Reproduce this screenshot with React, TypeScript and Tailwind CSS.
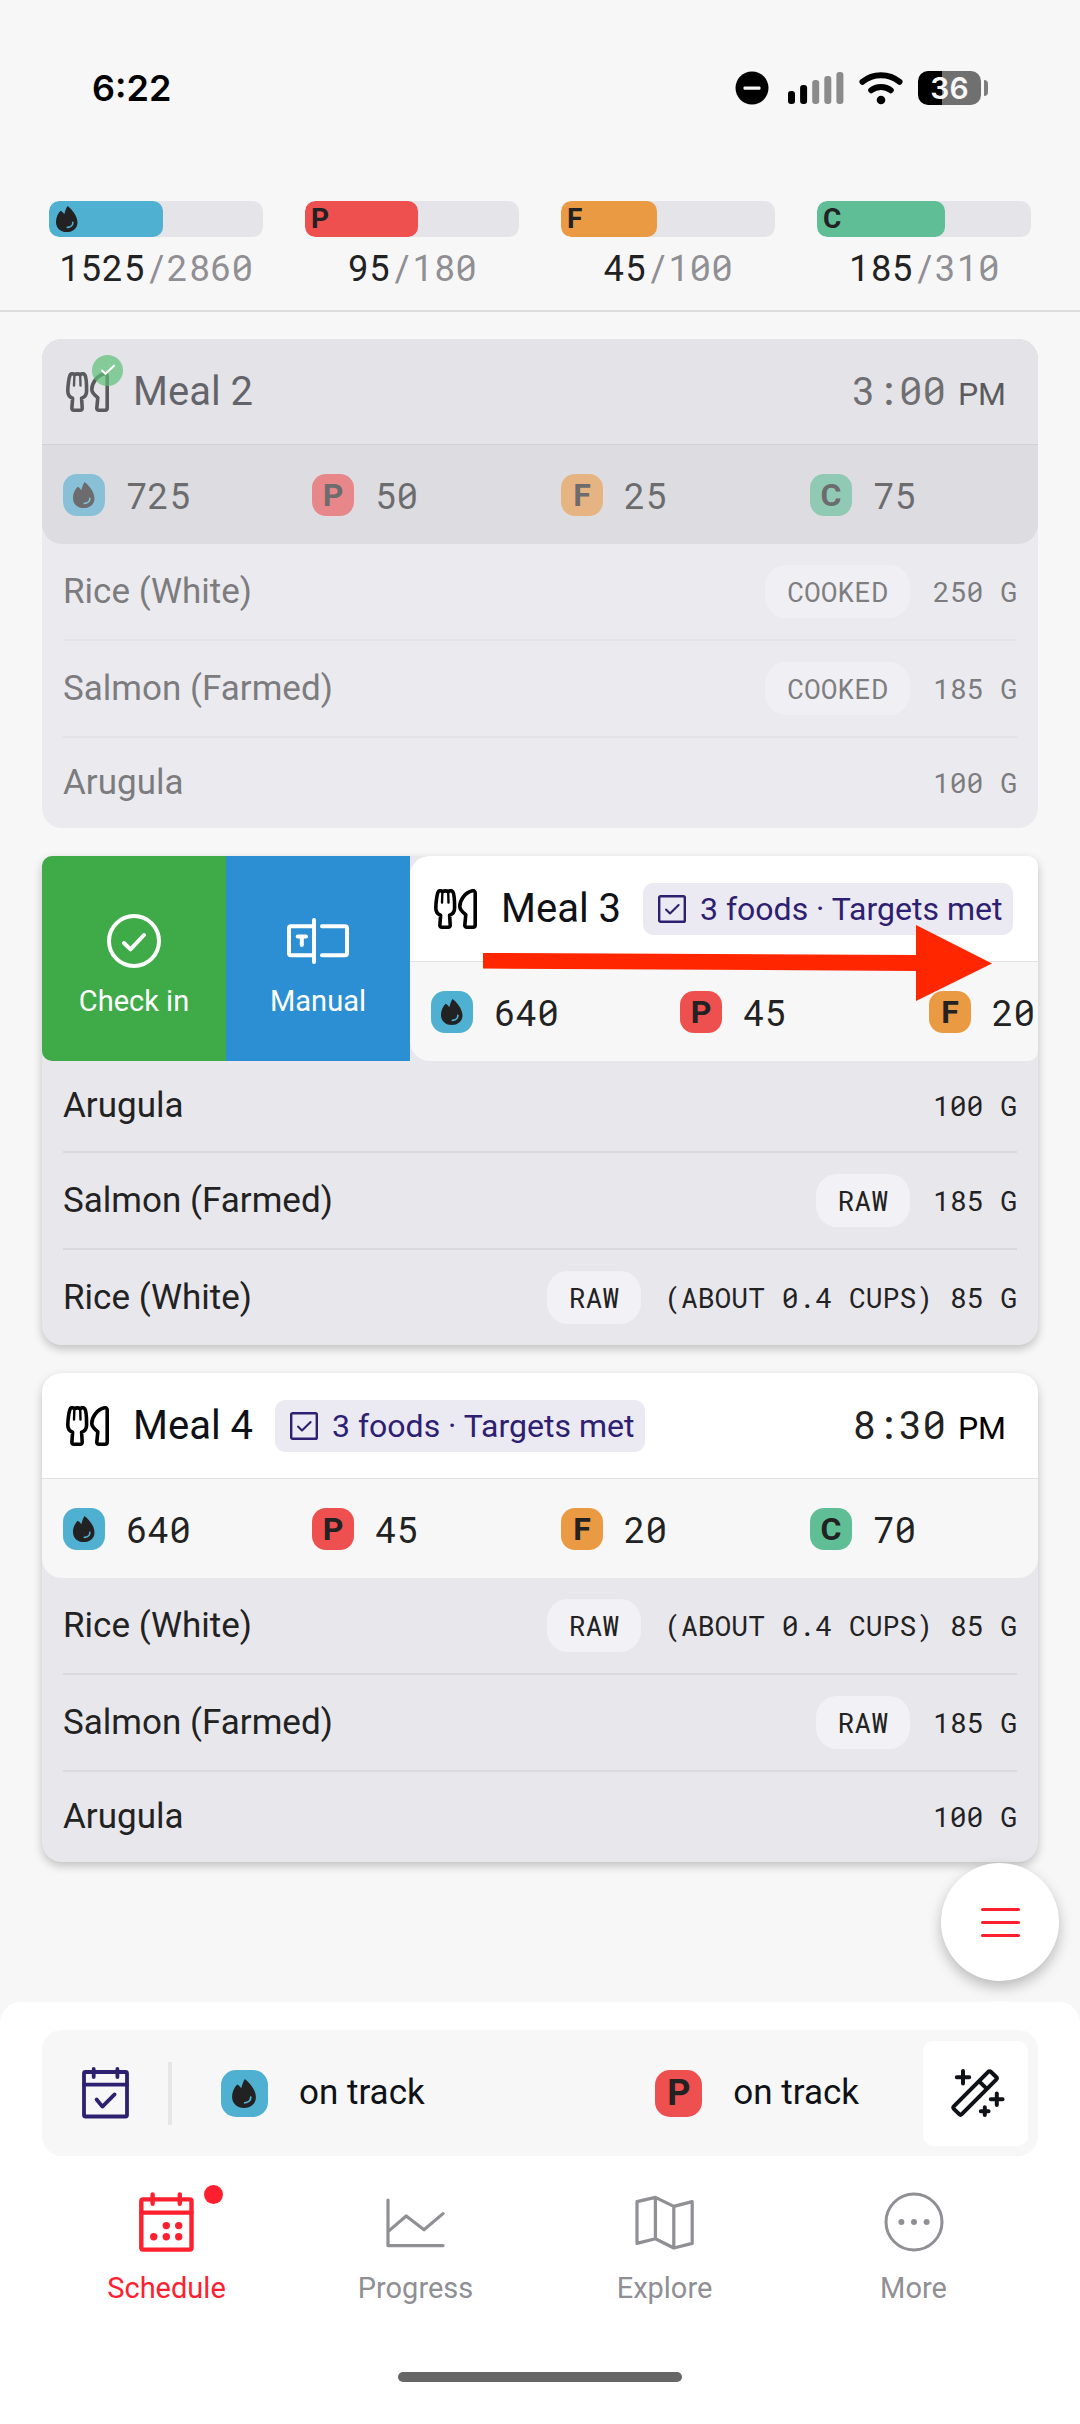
import React from 'react';
import clsx from 'clsx';

type MacroKey = 'kcal' | 'P' | 'F' | 'C';

interface Food {
  name: string;
  prep?: string;
  amount: string;
}

interface Meal {
  title: string;
  time?: string;
  targets?: string;
  macros: number[];
  foods: Food[];
}

const MACROS: MacroKey[] = ['kcal', 'P', 'F', 'C'];

const MACRO_BG: Record<MacroKey, string> = {
  kcal: 'bg-[#50b0d1]',
  P: 'bg-[#ee4f4f]',
  F: 'bg-[#eb9a44]',
  C: 'bg-[#60be96]',
};

const TOTALS = [
  { key: 'kcal' as MacroKey, eaten: 1525, goal: 2860 },
  { key: 'P' as MacroKey, eaten: 95, goal: 180 },
  { key: 'F' as MacroKey, eaten: 45, goal: 100 },
  { key: 'C' as MacroKey, eaten: 185, goal: 310 },
];

const MEAL_2: Meal = {
  title: 'Meal 2',
  time: '3:00',
  macros: [725, 50, 25, 75],
  foods: [
    { name: 'Rice (White)', prep: 'COOKED', amount: '250 G' },
    { name: 'Salmon (Farmed)', prep: 'COOKED', amount: '185 G' },
    { name: 'Arugula', amount: '100 G' },
  ],
};

const MEAL_3: Meal = {
  title: 'Meal 3',
  targets: '3 foods · Targets met',
  macros: [640, 45, 20],
  foods: [
    { name: 'Arugula', amount: '100 G' },
    { name: 'Salmon (Farmed)', prep: 'RAW', amount: '185 G' },
    { name: 'Rice (White)', prep: 'RAW', amount: '(ABOUT 0.4 CUPS) 85 G' },
  ],
};

const MEAL_4: Meal = {
  title: 'Meal 4',
  time: '8:30',
  targets: '3 foods · Targets met',
  macros: [640, 45, 20, 70],
  foods: [
    { name: 'Rice (White)', prep: 'RAW', amount: '(ABOUT 0.4 CUPS) 85 G' },
    { name: 'Salmon (Farmed)', prep: 'RAW', amount: '185 G' },
    { name: 'Arugula', amount: '100 G' },
  ],
};

const MONO = "font-['Roboto_Mono','DejaVu_Sans_Mono',monospace]";

/* ---------- icons ---------- */

function FlameIcon({ className }: { className?: string }) {
  return (
    <svg viewBox="9 6 25 29" className={className} aria-hidden="true">
      <path
        fill="#222"
        d="M22 7C26 10 32.3 17 32.3 24C32.3 30 27.5 34 21.2 34C15 34 10 30 10 23.5C10 19 12 15 14.8 12C16 12.5 17.5 14 18.6 15.5C19.5 12.5 20.5 9 22 7Z"
      />
      <path d="M27.5 24C27.6 27 25 29 21.8 29.2" fill="none" stroke="#50b0d1" strokeWidth="1.7" strokeLinecap="round" />
    </svg>
  );
}

function UtensilsIcon() {
  return (
    <svg
      viewBox="0 0 43 40"
      className="h-10 w-[43px]"
      fill="none"
      stroke="#000"
      strokeWidth="3.6"
      strokeLinejoin="round"
      strokeLinecap="round"
      aria-hidden="true"
    >
      <path d="M4.6 2.2C3 4 1.8 14 1.8 19C1.8 23 4 25.2 6.6 26.2L5.9 36C5.8 37.6 6.5 38.2 8 38.2H14C15.6 38.2 16.3 37.6 16.2 36L15.6 26.2C19 25 20.6 22.5 20.6 19C20.6 14 20 4.5 18.8 2.8C17.8 1.6 15.6 1.8 14.2 2.6C12.8 1.8 10 1.8 8.4 2.6C7.2 1.8 5.6 1.6 4.6 2.2Z" />
      <path d="M8.4 3L8 13.6M14.2 3L14.5 13.6" strokeWidth="2.4" />
      <path d="M38.4 1.8C31 3.5 25.8 11 25.8 17.5C25.8 21 29 23.4 31.8 25.8L30.8 36C30.7 37.6 31.5 38.2 33 38.2H39C40.7 38.2 41.2 37.6 41.2 36V4C41.2 2.2 40 1.5 38.4 1.8Z" />
    </svg>
  );
}

function CheckboxIcon() {
  return (
    <svg viewBox="0 0 28 28" className="size-7" fill="none" stroke="#2e2070" strokeWidth="2.4" aria-hidden="true">
      <rect x="1.2" y="1.2" width="25.6" height="25.6" rx="1.4" />
      <path d="M8 14.6L12 18.4L20.6 10" strokeWidth="2.1" strokeLinecap="round" strokeLinejoin="round" />
    </svg>
  );
}

function CheckCircleIcon() {
  return (
    <svg viewBox="0 0 54 54" className="size-[54px]" fill="none" stroke="#fff" strokeWidth="4" aria-hidden="true">
      <circle cx="27" cy="27" r="25" />
      <path d="M17 29L23.5 35.4L37 21" strokeLinecap="round" strokeLinejoin="round" />
    </svg>
  );
}

function ManualIcon() {
  return (
    <svg
      viewBox="0 0 62 54"
      className="h-[54px] w-[62px]"
      fill="none"
      stroke="#fff"
      strokeWidth="4"
      strokeLinecap="round"
      strokeLinejoin="round"
      aria-hidden="true"
    >
      <path d="M27 12.3H4C2.8 12.3 2 13.1 2 14.3V39.3C2 40.5 2.8 41.3 4 41.3H27M27 6V48M35 12.3H58C59.2 12.3 60 13.1 60 14.3V39.3C60 40.5 59.2 41.3 58 41.3H35" />
      <path d="M10.7 22.6H19M14.8 22.6V31" />
    </svg>
  );
}

function CalendarCheckIcon() {
  return (
    <svg
      viewBox="0 0 47 52"
      className="h-[52px] w-[47px]"
      fill="none"
      stroke="#2e2070"
      strokeWidth="3.8"
      strokeLinecap="round"
      strokeLinejoin="round"
      aria-hidden="true"
    >
      <rect x="2" y="5" width="43" height="44.5" rx="1.5" />
      <path d="M2 17.6H45M11.7 2V10M35.4 2V10M14.6 32.5L20.4 39.6L32.6 27.4" />
    </svg>
  );
}

function WandIcon() {
  return (
    <svg
      viewBox="0 0 54 48"
      className="h-12 w-[54px]"
      fill="none"
      stroke="#0e1116"
      strokeWidth="4"
      strokeLinecap="round"
      strokeLinejoin="round"
      aria-hidden="true"
    >
      <path d="M37.2 2.8L2.8 37.4C2 38.2 2 39 2.8 39.8L8.2 45.2C9 46 10 46 10.8 45.2L45.2 10.6C46 9.8 46 8.8 45.2 8L39.8 2.8C39 2 38 2 37.2 2.8Z" />
      <path d="M28.4 12.6L35.4 19.4" />
      <path d="M12 2V14.5M5.8 8.2H18.2M45.8 24.5V36M39.8 30.2H51.6M33.8 38.2V46M29.8 42.2H37.6" />
    </svg>
  );
}

function ScheduleIcon() {
  return (
    <svg viewBox="0 0 55 60" className="h-[60px] w-[55px]" fill="none" stroke="currentColor" strokeWidth="4.4" strokeLinecap="round" aria-hidden="true">
      <rect x="2.3" y="7.4" width="50.2" height="50.2" rx="1.8" strokeLinejoin="round" />
      <path d="M2.3 20.6H52.5M13.6 2.4V11.8M40.8 2.4V11.8" />
      <g fill="currentColor" stroke="none">
        <circle cx="27.3" cy="33.6" r="3.7" />
        <circle cx="39.7" cy="33.6" r="3.7" />
        <circle cx="14.7" cy="44.8" r="3.7" />
        <circle cx="27.3" cy="44.8" r="3.7" />
        <circle cx="39.7" cy="44.8" r="3.7" />
      </g>
    </svg>
  );
}

function ProgressIcon() {
  return (
    <svg
      viewBox="0 0 59 60"
      className="h-[60px] w-[59px]"
      fill="none"
      stroke="currentColor"
      strokeWidth="3.2"
      strokeLinecap="round"
      strokeLinejoin="round"
      aria-hidden="true"
    >
      <path d="M2 8V53.6H57M2 39.6L20.2 24L38 37.8L57 21.6" />
    </svg>
  );
}

function ExploreIcon() {
  return (
    <svg
      viewBox="0 0 59 60"
      className="h-[60px] w-[59px]"
      fill="none"
      stroke="currentColor"
      strokeWidth="3.2"
      strokeLinejoin="round"
      aria-hidden="true"
    >
      <path d="M2 9.6L20.4 5.4L38.8 14.4L57.2 9.6V51.4L38.8 56L20.4 46.8L2 51.4ZM20.4 5.4V46.8M38.8 14.4V56" />
    </svg>
  );
}

function MoreIcon() {
  return (
    <svg viewBox="0 0 60 60" className="size-[60px]" fill="none" stroke="currentColor" strokeWidth="3" aria-hidden="true">
      <circle cx="30" cy="30" r="28" />
      <g fill="currentColor" stroke="none">
        <circle cx="17.4" cy="30" r="3" />
        <circle cx="30" cy="30" r="3" />
        <circle cx="42.6" cy="30" r="3" />
      </g>
    </svg>
  );
}

/* ---------- status bar ---------- */

function StatusBar() {
  return (
    <div className="flex h-16 items-center justify-between px-[92px]">
      <span className="font-['Inter',sans-serif] text-[36px] leading-10 font-semibold text-black">6:22</span>
      <div className="flex items-center">
        <svg viewBox="0 0 34 34" className="mr-[19px] size-[34px]" aria-hidden="true">
          <circle cx="17" cy="17" r="16.5" />
          <rect x="8.5" y="15.5" width="17" height="3.2" rx="1" fill="#f7f7f7" />
        </svg>
        <svg viewBox="0 0 56 34" className="mr-[15px] h-[34px] w-14" aria-hidden="true">
          <rect x="0" y="20" width="7" height="13" rx="3" />
          <rect x="12.1" y="14" width="7" height="19" rx="3" />
          <g fill="#8b8b8b">
            <rect x="24.2" y="9" width="7" height="24" rx="3" />
            <rect x="36.3" y="5" width="7" height="28" rx="3" />
            <rect x="48.4" y="1" width="7" height="32" rx="3" />
          </g>
        </svg>
        <svg
          viewBox="0 0 44 34"
          className="mr-[15px] h-[34px] w-11"
          fill="none"
          stroke="#000"
          strokeWidth="6"
          strokeLinecap="round"
          aria-hidden="true"
        >
          <path d="M3.5 10.8C14 1.9 30 1.9 40.5 10.8" />
          <path d="M12.2 19.2C17.5 14.8 26.5 14.8 31.8 19.2" />
          <circle cx="22" cy="29" r="4.3" fill="#000" stroke="none" />
        </svg>
        <div className="flex h-[34px] w-[63px] items-center justify-center rounded-[10px] bg-[linear-gradient(to_right,#000_38%,#707070_38%)] font-['Inter',sans-serif] text-[30px] font-semibold text-[#f7f7f7]">
          36
        </div>
        <span className="ml-[3px] h-4 w-1 rounded-r-full bg-[#7d7d7d]" />
      </div>
    </div>
  );
}

/* ---------- macro pieces ---------- */

function MacroBadge({ macro, large }: { macro: MacroKey; large?: boolean }) {
  return (
    <span
      className={clsx(
        'flex shrink-0 items-center justify-center font-bold text-[#222]',
        large ? 'size-[47px] rounded-[15px] text-[36px]' : 'size-[42px] rounded-[14px] text-[32px]',
        MACRO_BG[macro],
      )}
    >
      {macro === 'kcal' ? <FlameIcon className={large ? 'h-[31px]' : 'h-7'} /> : macro}
    </span>
  );
}

function TotalBar({ macro, eaten, goal }: { macro: MacroKey; eaten: number; goal: number }) {
  return (
    <div className="flex flex-col items-center gap-[10px]">
      <div className="h-9 w-full overflow-hidden rounded-[10px] bg-[#e5e4e9]">
        <div
          className={clsx('flex h-full items-center rounded-[10px] pl-[6px] text-[28px] leading-9 font-bold text-[#222]', MACRO_BG[macro])}
          style={{ width: `${(eaten / goal) * 100}%` }}
        >
          {macro === 'kcal' ? <FlameIcon className="h-7" /> : macro}
        </div>
      </div>
      <div className={clsx('text-[36px] leading-10 text-[#222]', MONO)}>
        {eaten}
        <span className="text-[#8f8f94]">/{goal}</span>
      </div>
    </div>
  );
}

/* ---------- meal card ---------- */

function MealHead({ meal, done }: { meal: Meal; done?: boolean }) {
  return (
    <div className={clsx('overflow-hidden rounded-[20px]', done ? 'bg-[#dddde1]' : 'bg-[#f7f7f7]')}>
      <div
        className={clsx(
          'flex h-[106px] items-center border-b pr-8 pl-6',
          done ? 'border-[#d2d2d6] bg-[#e4e3e8]' : 'border-[#e1e1e3] bg-white',
        )}
      >
        <div className="relative">
          <div className={clsx(done && 'opacity-60')}>
            <UtensilsIcon />
          </div>
          {done && (
            <span className="absolute -top-[17px] left-[26px] flex size-[31px] items-center justify-center rounded-full bg-[#5dbf78]/70">
              <svg viewBox="0 0 16 12" className="h-3 w-4" fill="none" stroke="#fff" strokeWidth="2" strokeLinecap="round" aria-hidden="true">
                <path d="M2 6.5L5.5 9.8L14 1.8" />
              </svg>
            </span>
          )}
        </div>
        <h2 className={clsx('ml-6 shrink-0 text-[40px] leading-[48px] text-[#0e1116]', done && 'opacity-60')}>{meal.title}</h2>
        {meal.targets && (
          <span className="ml-[22px] flex h-[52px] shrink-0 items-center gap-[14px] rounded-[10px] bg-[#ebe9f2] pr-[11px] pl-[15px] text-[32px] whitespace-nowrap text-[#2e2070]">
            <CheckboxIcon />
            {meal.targets}
          </span>
        )}
        {meal.time && (
          <div className={clsx('ml-auto flex items-baseline gap-3', done && 'opacity-60')}>
            <span className={clsx('text-[39px] leading-[48px] text-[#222]', MONO)}>{meal.time}</span>
            <span className="text-[32px] leading-[48px] text-black">PM</span>
          </div>
        )}
      </div>
      <ul className={clsx('grid h-[99px] grid-cols-4', done && 'opacity-60')}>
        {meal.macros.map((grams, i) => (
          <li key={MACROS[i]} className="flex items-center gap-[21px] pl-[21px]">
            <MacroBadge macro={MACROS[i]} />
            <span className={clsx('text-[36px] leading-10 text-[#222]', MONO)}>{grams}</span>
          </li>
        ))}
      </ul>
    </div>
  );
}

function FoodList({ foods, done }: { foods: Food[]; done?: boolean }) {
  return (
    <ul className={clsx('divide-y-2 px-[21px]', done ? 'divide-[#e3e2e7]' : 'divide-[#dad9df]')}>
      {foods.map((food) => (
        <li key={food.name} className="flex items-center py-[21px] text-[#222]">
          <span className={clsx('text-[35px] leading-[48px]', done && 'opacity-55')}>{food.name}</span>
          <span className={clsx('ml-auto flex items-center gap-[23px] text-[28px]', MONO)}>
            {food.prep && (
              <span className={clsx('flex h-[53px] items-center rounded-[21px] px-[22px]', done ? 'bg-[#f0eff4]' : 'bg-[#f2f1f6]')}>
                <span className={clsx(done && 'opacity-55')}>{food.prep}</span>
              </span>
            )}
            <span className={clsx(done && 'opacity-55')}>{food.amount}</span>
          </span>
        </li>
      ))}
    </ul>
  );
}

function SwipedMealCard({ meal }: { meal: Meal }) {
  return (
    <article className="relative rounded-[20px] rounded-t-[10px] bg-[#e8e7ec] shadow-[0_4px_10px_rgba(0,0,0,0.22)]">
      <div className="flex overflow-hidden rounded-[10px]">
        <button type="button" className="flex w-[184px] shrink-0 flex-col items-center justify-center gap-[15px] bg-[#3eaa48] pt-4 text-white">
          <CheckCircleIcon />
          <span className="text-[29px] leading-9">Check in</span>
        </button>
        <button type="button" className="flex w-[184px] shrink-0 flex-col items-center justify-center gap-[15px] bg-[#2d8fd3] pt-4 text-white">
          <ManualIcon />
          <span className="text-[29px] leading-9">Manual</span>
        </button>
        {/* keeps its full width and runs off the right edge while swiped */}
        <div className="w-full shrink-0">
          <MealHead meal={meal} />
        </div>
      </div>
      <FoodList foods={meal.foods} />
      <svg viewBox="0 0 510 78" className="absolute top-[68px] right-[45px] h-[78px] w-[510px]" aria-hidden="true">
        <path fill="#ff2600" d="M0 29L433 31V1L509 39.5L433 77V47L0 44.5Z" />
      </svg>
    </article>
  );
}

function MealCard({ meal, done }: { meal: Meal; done?: boolean }) {
  return (
    <article className={clsx('rounded-[20px]', done ? 'bg-[#ebeaef]' : 'bg-[#e8e7ec] shadow-[0_4px_10px_rgba(0,0,0,0.22)]')}>
      <MealHead meal={meal} done={done} />
      <FoodList foods={meal.foods} done={done} />
    </article>
  );
}

/* ---------- bottom area ---------- */

function TrackStatus({ macro }: { macro: MacroKey }) {
  return (
    <div className="flex items-center gap-[31px]">
      <MacroBadge macro={macro} large />
      <span className="text-[35px] leading-10 text-[#0e1116]">on track</span>
    </div>
  );
}

const TABS = [
  { label: 'Schedule', icon: <ScheduleIcon />, active: true },
  { label: 'Progress', icon: <ProgressIcon /> },
  { label: 'Explore', icon: <ExploreIcon /> },
  { label: 'More', icon: <MoreIcon /> },
];

export default function App() {
  return (
    <div className="flex min-h-screen flex-col bg-[#f7f7f7] font-['Roboto',sans-serif]">
      <header className="border-b-2 border-[#dedede] pt-14 pb-[23px]">
        <StatusBar />
        <div className="mt-[81px] grid grid-cols-4 gap-[42px] px-[49px]">
          {TOTALS.map((t) => (
            <TotalBar key={t.key} macro={t.key} eaten={t.eaten} goal={t.goal} />
          ))}
        </div>
      </header>

      <main className="relative flex flex-1 flex-col gap-7 px-[42px] pt-[27px] pb-[140px]">
        <MealCard meal={MEAL_2} done />
        <SwipedMealCard meal={MEAL_3} />
        <MealCard meal={MEAL_4} />
        <button
          type="button"
          aria-label="Menu"
          className="absolute right-[21px] bottom-[21px] flex size-[118px] flex-col items-center justify-center gap-[10px] rounded-full bg-white shadow-[0_6px_14px_rgba(0,0,0,0.25)]"
        >
          <span className="h-[3px] w-[39px] rounded-full bg-[#ff202f]" />
          <span className="h-[3px] w-[39px] rounded-full bg-[#ff202f]" />
          <span className="h-[3px] w-[39px] rounded-full bg-[#ff202f]" />
        </button>
      </main>

      <footer className="rounded-t-[21px] bg-white px-[42px] pt-7 pb-[42px]">
        <div className="flex h-[126px] items-center rounded-[20px] bg-[#f7f7f7] pr-[10px] pl-10">
          <CalendarCheckIcon />
          <span className="ml-[39px] h-[63px] w-1 bg-[#e6e6e6]" />
          <div className="flex flex-1 items-center justify-between pr-16 pl-[49px]">
            <TrackStatus macro="kcal" />
            <TrackStatus macro="P" />
          </div>
          <button type="button" aria-label="Adjust plan" className="flex size-[105px] items-center justify-center rounded-[10px] bg-white pl-1">
            <WandIcon />
          </button>
        </div>

        <nav className="mt-9 grid grid-cols-4">
          {TABS.map((tab) => (
            <a
              key={tab.label}
              href={`#${tab.label.toLowerCase()}`}
              className={clsx('flex flex-col items-center gap-[18px]', tab.active ? 'text-[#ff202f]' : 'text-[#8f8f94]')}
            >
              <span className="relative">
                {tab.icon}
                {tab.active && <span className="absolute -top-[7px] -right-[29px] size-[19px] rounded-full bg-[#ff202f]" />}
              </span>
              <span className="text-[29px] leading-9">{tab.label}</span>
            </a>
          ))}
        </nav>

        <div className="mx-auto mt-[66px] h-[10px] w-[284px] rounded-full bg-[#666]" />
      </footer>
    </div>
  );
}
